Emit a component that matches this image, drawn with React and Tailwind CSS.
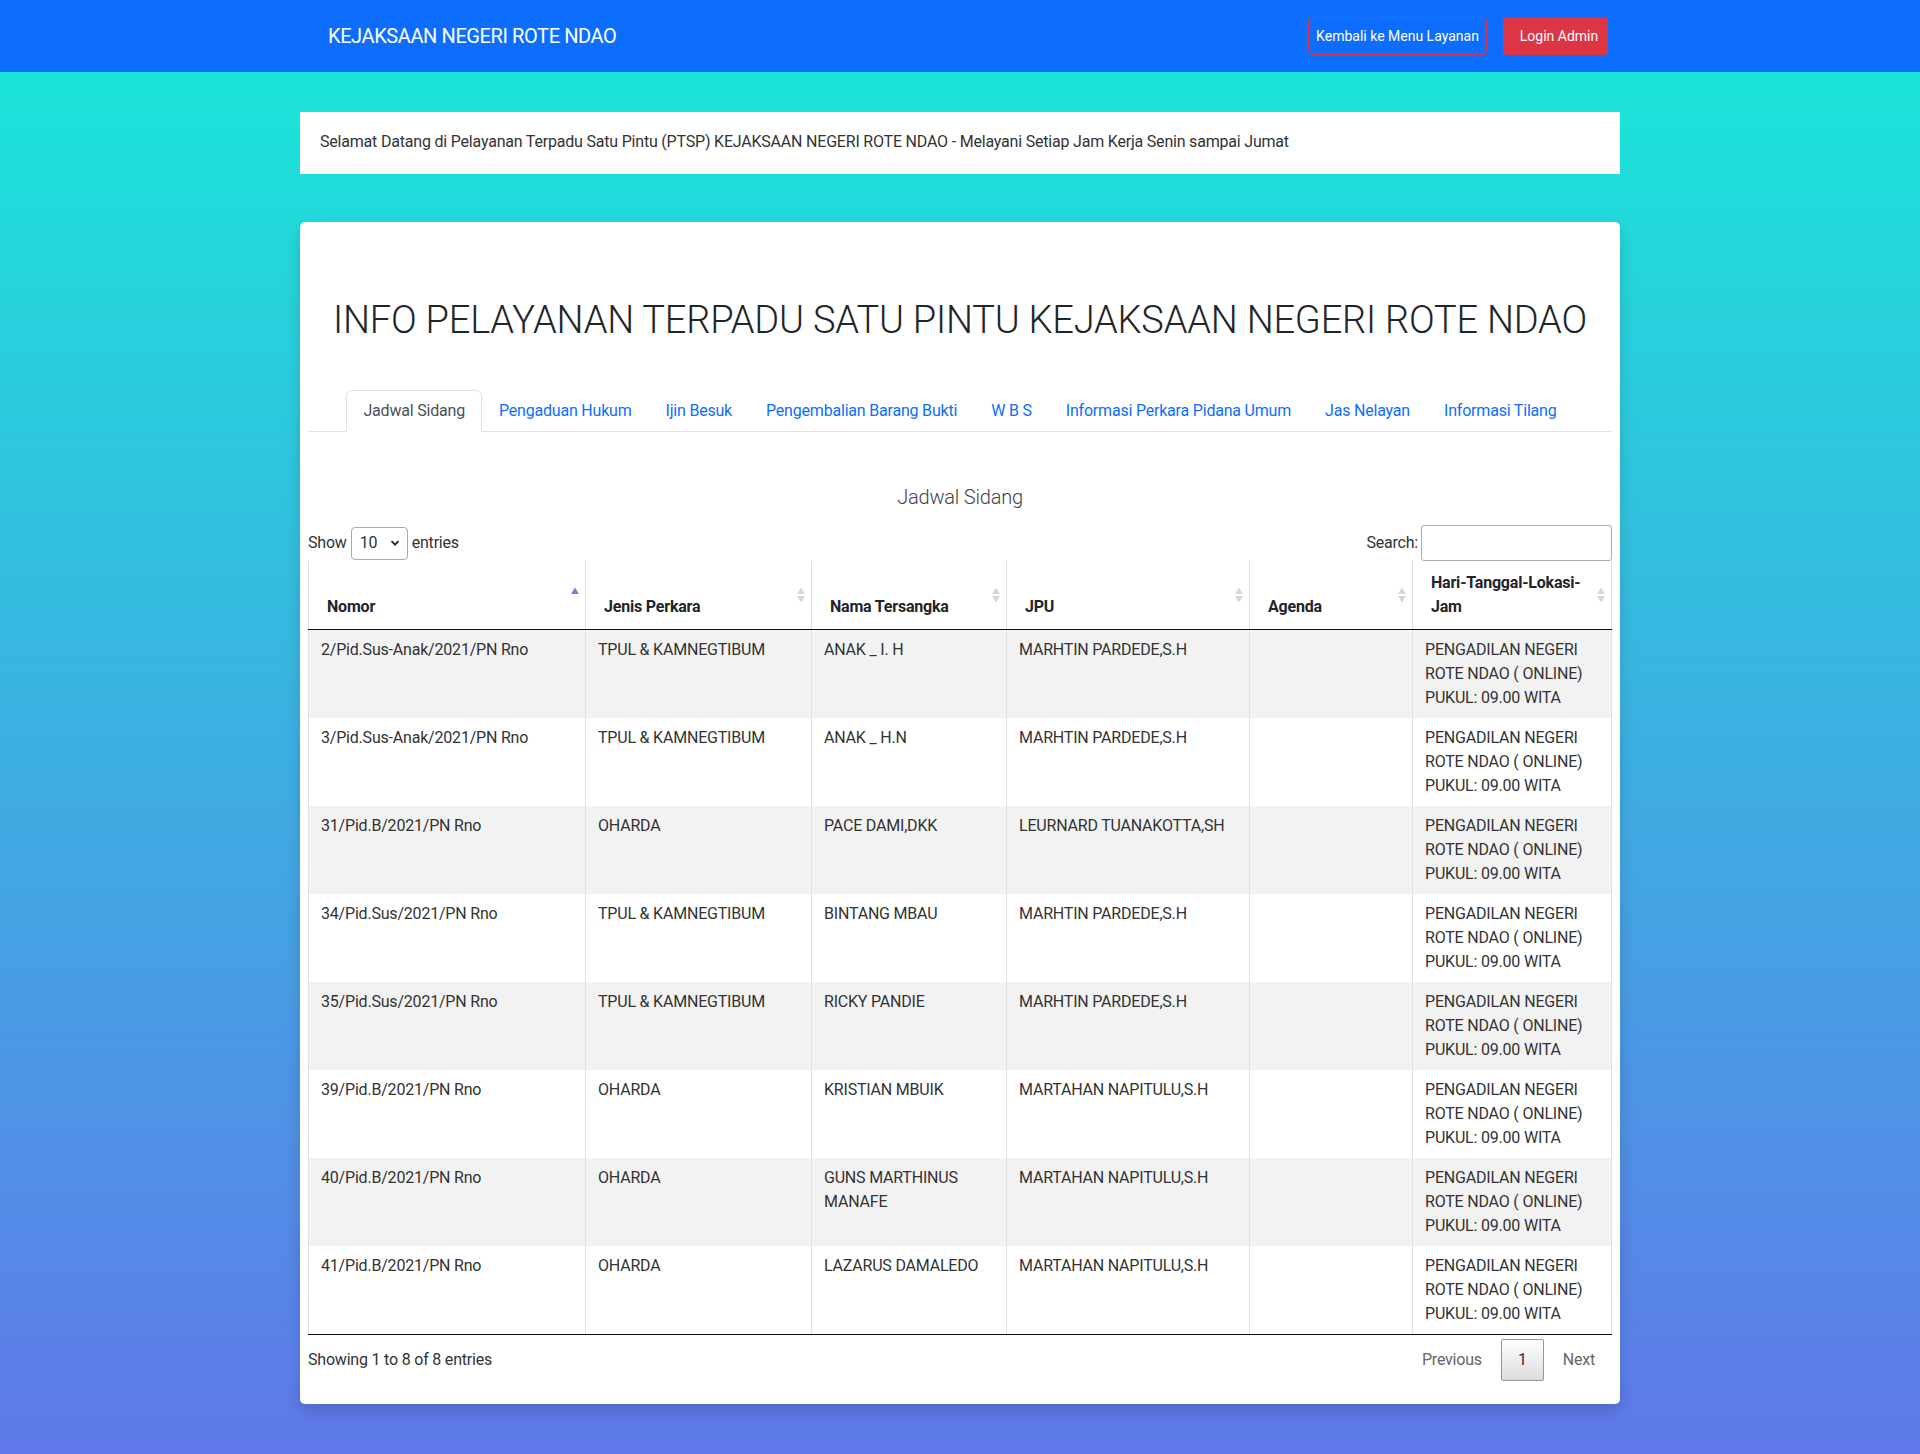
import React from "react";

const rows = [
  ["2/Pid.Sus-Anak/2021/PN Rno", "TPUL & KAMNEGTIBUM", ["ANAK _ I. H"], "MARHTIN PARDEDE,S.H"],
  ["3/Pid.Sus-Anak/2021/PN Rno", "TPUL & KAMNEGTIBUM", ["ANAK _ H.N"], "MARHTIN PARDEDE,S.H"],
  ["31/Pid.B/2021/PN Rno", "OHARDA", ["PACE DAMI,DKK"], "LEURNARD TUANAKOTTA,SH"],
  ["34/Pid.Sus/2021/PN Rno", "TPUL & KAMNEGTIBUM", ["BINTANG MBAU"], "MARHTIN PARDEDE,S.H"],
  ["35/Pid.Sus/2021/PN Rno", "TPUL & KAMNEGTIBUM", ["RICKY PANDIE"], "MARHTIN PARDEDE,S.H"],
  ["39/Pid.B/2021/PN Rno", "OHARDA", ["KRISTIAN MBUIK"], "MARTAHAN NAPITULU,S.H"],
  ["40/Pid.B/2021/PN Rno", "OHARDA", ["GUNS MARTHINUS", "MANAFE"], "MARTAHAN NAPITULU,S.H"],
  ["41/Pid.B/2021/PN Rno", "OHARDA", ["LAZARUS DAMALEDO"], "MARTAHAN NAPITULU,S.H"],
];

const tabs = [
  "Jadwal Sidang",
  "Pengaduan Hukum",
  "Ijin Besuk",
  "Pengembalian Barang Bukti",
  "W B S",
  "Informasi Perkara Pidana Umum",
  "Jas Nelayan",
  "Informasi Tilang",
];

function SortIcon({ active }) {
  return (
    <svg
      width="8"
      height="15"
      viewBox="0 0 8 15"
      className="absolute right-[6px] top-1/2 -translate-y-1/2"
    >
      {active ? (
        <polygon points="0,6.5 4,0 8,6.5" fill="#7f7fdf" />
      ) : (
        <>
          <polygon points="0,6.5 4,0 8,6.5" fill="#d6d6d6" />
          <polygon points="0,8.5 4,15 8,8.5" fill="#d6d6d6" />
        </>
      )}
    </svg>
  );
}

function Th({ children, active }) {
  return (
    <th className="relative border-l border-r border-b border-l-[#dee2e6] border-r-[#dee2e6] border-b-[#111] pl-[18px] pr-[16px] pt-[10px] pb-[10px] text-left align-bottom text-[16px] font-bold leading-6 text-[#212529]">
      {children}
      <SortIcon active={active} />
    </th>
  );
}

const tdBase = "border-l border-r border-l-[#dee2e6] border-r-[#dee2e6] px-3 py-2 align-top leading-6 text-[#333]";

export default function App() {
  return (
    <div className="min-h-screen bg-[linear-gradient(to_bottom,#17ead9,#6078ea)] pb-[50px] font-['Roboto','Liberation_Sans',sans-serif] text-[16px] tracking-[-0.2px] text-[#212529]">
      <nav className="h-[72px] bg-[#0d6efd]">
        <div className="mx-auto flex h-full w-[1320px] items-center justify-between px-3">
          <span className="ml-4 text-[20px] leading-[30px] tracking-[-0.4px] text-white">KEJAKSAAN NEGERI ROTE NDAO</span>
          <div className="flex items-center gap-4">
            <button className="h-[38px] w-[179px] rounded-[4px] border border-[#dc3545] text-[14px] leading-6 tracking-normal text-white">
              Kembali ke Menu Layanan
            </button>
            <button className="h-[38px] w-[105px] rounded-[4px] border border-[#dc3545] bg-[#dc3545] pl-[7px] text-[14px] leading-6 tracking-normal text-white">
              Login Admin
            </button>
          </div>
        </div>
      </nav>

      <main className="mx-auto w-[1320px] pt-[40px]">
        <div className="flex h-[62px] items-center bg-white px-5 pb-[3px] leading-6 text-[#333]">
          Selamat Datang di Pelayanan Terpadu Satu Pintu (PTSP) KEJAKSAAN NEGERI ROTE NDAO - Melayani Setiap Jam Kerja Senin sampai Jumat
        </div>

        <div className="mt-[48px] rounded-[5px] bg-white p-2 pb-[23px] shadow-[0_0.5rem_1rem_rgba(0,0,0,0.15)]">
          <h1 className="mt-[66px] whitespace-nowrap text-center text-[38px] font-light leading-[48px] tracking-[-0.2px] text-[#212529]">
            INFO PELAYANAN TERPADU SATU PINTU KEJAKSAAN NEGERI ROTE NDAO
          </h1>

          <div className="mt-[46px] flex justify-center border-b border-[#dee2e6]">
            {tabs.map((t, i) =>
              i === 0 ? (
                <div
                  key={t}
                  className="-mb-px rounded-t-[6px] border border-[#dee2e6] border-b-white bg-white px-4 py-2 leading-6 text-[#495057]"
                >
                  {t}
                </div>
              ) : (
                <div
                  key={t}
                  className="-mb-px border border-transparent px-4 py-2 leading-6 text-[#0d6efd]"
                >
                  {t}
                </div>
              )
            )}
          </div>

          <div className="mt-[53px] text-center text-[20px] font-light leading-6 text-[#444]">
            Jadwal Sidang
          </div>

          <div className="mt-4 flex h-[36px] items-center justify-between text-[#333]">
            <div className="flex items-center">
              <span>Show</span>
              <div className="mx-[4px] flex h-[33px] w-[57px] items-center justify-between rounded-[4px] border border-[#aaa] bg-white pl-[8px] pr-[7px]">
                <span>10</span>
                <svg width="10" height="10" viewBox="0 0 10 10">
                  <path d="M1.5 3.2 L5 6.7 L8.5 3.2" fill="none" stroke="#222" strokeWidth="1.8" />
                </svg>
              </div>
              <span>entries</span>
            </div>
            <div className="flex items-center">
              <span>Search:</span>
              <div className="ml-[3px] h-[36px] w-[191px] rounded-[3px] border border-[#aaa] bg-white" />
            </div>
          </div>

          <table className="w-full table-fixed border-collapse">
            <colgroup>
              <col className="w-[277px]" />
              <col className="w-[226px]" />
              <col className="w-[195px]" />
              <col className="w-[243px]" />
              <col className="w-[163px]" />
              <col className="w-[199px]" />
            </colgroup>
            <thead>
              <tr>
                <Th active>Nomor</Th>
                <Th>Jenis Perkara</Th>
                <Th>Nama Tersangka</Th>
                <Th>JPU</Th>
                <Th>Agenda</Th>
                <Th>
                  Hari-Tanggal-Lokasi-
                  <br />
                  Jam
                </Th>
              </tr>
            </thead>
            <tbody>
              {rows.map((r, i) => {
                const td =
                  tdBase + (i === rows.length - 1 ? " border-b border-b-[#111]" : "");
                return (
                  <tr key={r[0]} className={i % 2 === 0 ? "bg-[#f2f2f2]" : "bg-white"}>
                    <td className={"h-[88px] " + td}>{r[0]}</td>
                    <td className={td}>{r[1]}</td>
                    <td className={td}>
                      {r[2].map((l, k) => (
                        <div key={k}>{l}</div>
                      ))}
                    </td>
                    <td className={td}>{r[3]}</td>
                    <td className={td}></td>
                    <td className={td}>
                      <div>PENGADILAN NEGERI</div>
                      <div>ROTE NDAO ( ONLINE)</div>
                      <div>PUKUL: 09.00 WITA</div>
                    </td>
                  </tr>
                );
              })}
            </tbody>
          </table>

          <div className="flex items-center justify-between pt-[4px] text-[#333]">
            <div>Showing 1 to 8 of 8 entries</div>
            <div className="flex items-center">
              <span className="ml-[2px] border border-transparent px-4 py-2 leading-6 text-[#666]">Previous</span>
              <span className="ml-[2px] rounded-[2px] border border-[#979797] bg-[linear-gradient(to_bottom,#fff_0%,#dcdcdc_100%)] px-4 py-2 leading-6 text-[#333]">
                1
              </span>
              <span className="ml-[2px] border border-transparent px-4 py-2 leading-6 text-[#666]">Next</span>
            </div>
          </div>
        </div>
      </main>
    </div>
  );
}
